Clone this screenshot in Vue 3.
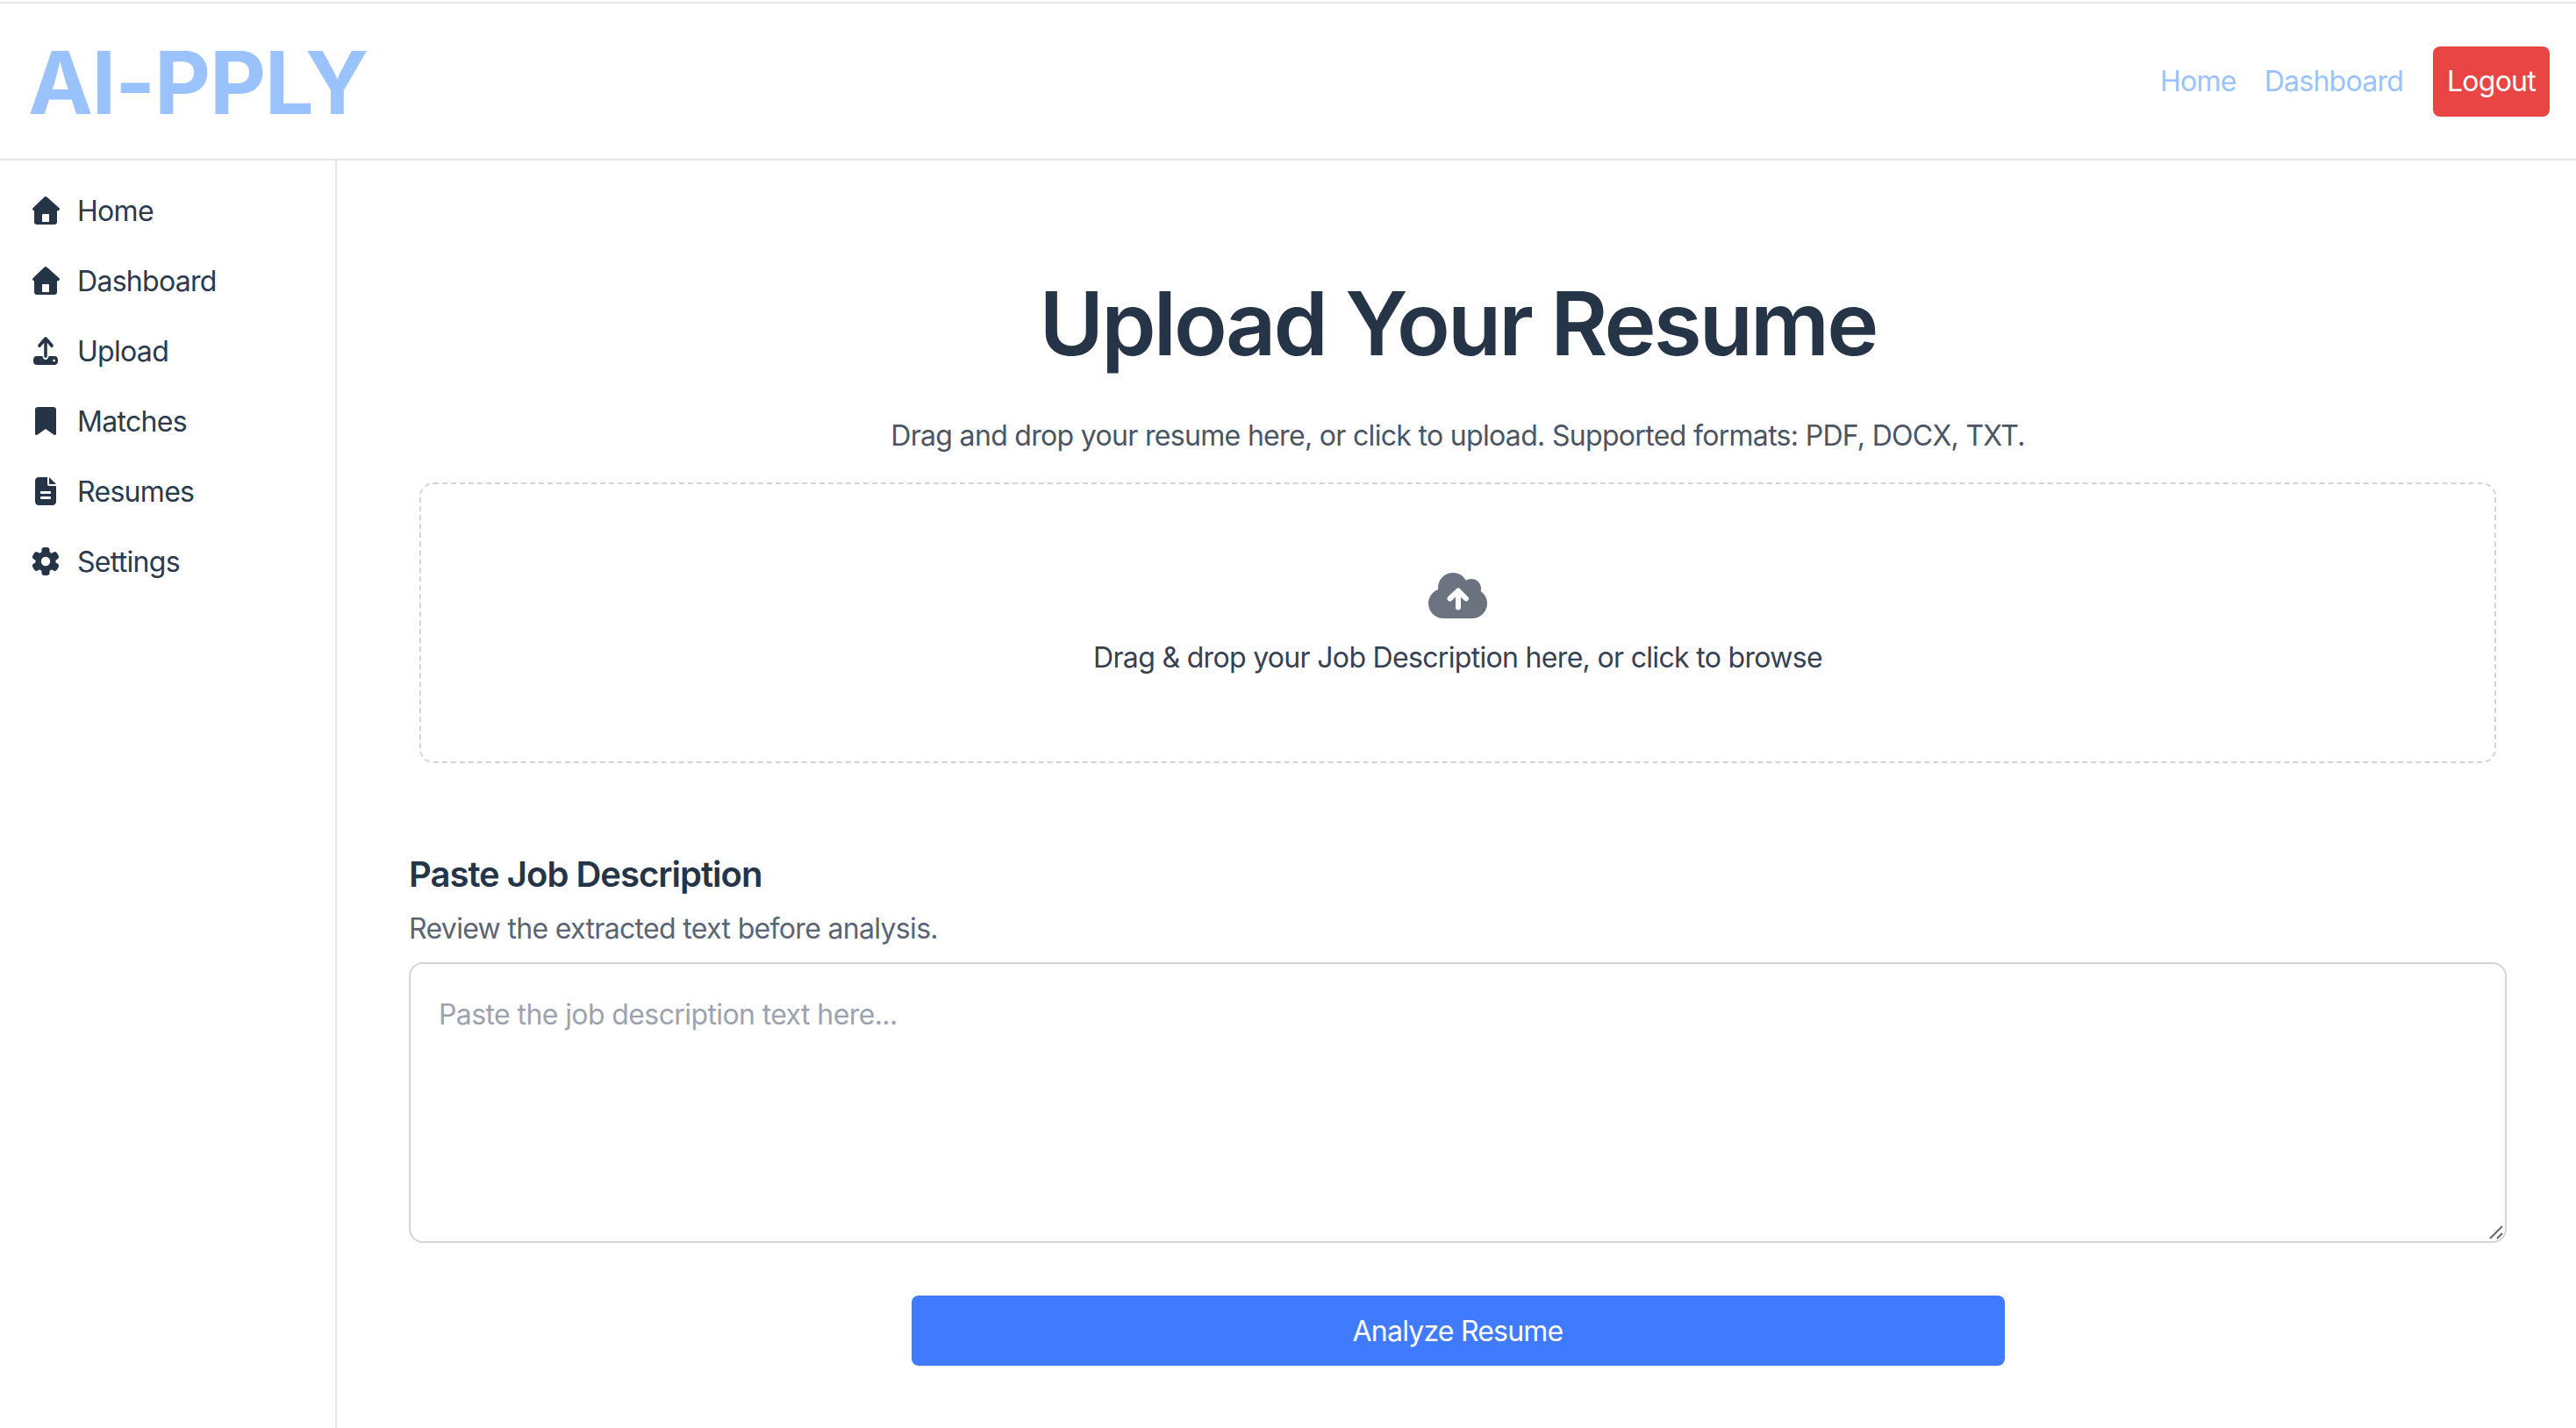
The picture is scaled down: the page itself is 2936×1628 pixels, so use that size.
<script setup>
const upload = { box: "0 0 512 512", width: 28, d: "M288 109.3V352c0 17.7-14.3 32-32 32s-32-14.3-32-32V109.3l-73.4 73.4c-12.5 12.5-32.8 12.5-45.3 0s-12.5-32.8 0-45.3l128-128c12.5-12.5 32.8-12.5 45.3 0l128 128c12.5 12.5 12.5 32.8 0 45.3s-32.8 12.5-45.3 0L288 109.3zM64 352H192c0 35.3 28.7 64 64 64s64-28.7 64-64H448c35.3 0 64 28.7 64 64v32c0 35.3-28.7 64-64 64H64c-35.3 0-64-28.7-64-64V416c0-35.3 28.7-64 64-64zM432 456a24 24 0 1 0 0-48 24 24 0 1 0 0 48z" };
const house = { box: "0 0 32 32", width: 32, d: "M14.6 .6c.8-.7 2-.7 2.8 0l13.9 12.3c1.3 1.2.5 3.3-1.3 3.3H29V29c0 1.7-1.3 3-3 3H6c-1.7 0-3-1.3-3-3V16.2h-.0c-1.8 0-2.6-2.1-1.3-3.3zM13 20c-.6 0-1 .4-1 1v8h8v-8c0-.6-.4-1-1-1z" };
const bookmark = { box: "0 0 384 512", width: 24, d: "M0 48V487.7C0 501.1 10.9 512 24.3 512c5 0 9.9-1.5 14-4.4L192 400 345.7 507.6c4.1 2.9 9 4.4 14 4.4c13.4 0 24.3-10.9 24.3-24.3V48c0-26.5-21.5-48-48-48H48C21.5 0 0 21.5 0 48z" };
const file = { box: "0 0 384 512", width: 24, d: "M64 0C28.7 0 0 28.7 0 64V448c0 35.3 28.7 64 64 64H320c35.3 0 64-28.7 64-64V160H256c-17.7 0-32-14.3-32-32V0H64zM256 0V128H384L256 0zM112 256H272c8.8 0 16 7.2 16 16v16c0 8.8-7.2 16-16 16H112c-8.8 0-16-7.2-16-16v-16c0-8.8 7.2-16 16-16zm0 96H272c8.8 0 16 7.2 16 16v16c0 8.8-7.2 16-16 16H112c-8.8 0-16-7.2-16-16v-16c0-8.8 7.2-16 16-16z" };

const navItems = [
  { label: "Home", icon: house },
  { label: "Dashboard", icon: house },
  { label: "Upload", icon: upload },
  { label: "Matches", icon: bookmark },
  { label: "Resumes", icon: file },
  { label: "Settings", icon: null },
];
</script>

<template>
  <div class="page">
    <header class="topbar">
      <div class="logo">AI-PPLY</div>
      <nav class="toplinks">
        <a class="toplink">Home</a>
        <a class="toplink">Dashboard</a>
        <button class="logout">Logout</button>
      </nav>
    </header>
    <div class="body">
      <aside class="sidebar">
        <a v-for="item in navItems" :key="item.label" class="navitem">
          <span class="navicon">
            <svg v-if="item.icon" :viewBox="item.icon.box" :width="item.icon.width" height="32" preserveAspectRatio="none">
              <path :d="item.icon.d" fill="currentColor" fill-rule="evenodd" />
            </svg>
            <svg v-else viewBox="0 0 32 32" width="32" height="32">
              <g fill="currentColor">
                <rect x="11.5" y="0" width="9" height="32" rx="3" />
                <rect x="11.5" y="0" width="9" height="32" rx="3" transform="rotate(60 16 16)" />
                <rect x="11.5" y="0" width="9" height="32" rx="3" transform="rotate(120 16 16)" />
                <circle cx="16" cy="16" r="11.5" />
              </g>
              <circle cx="16" cy="16" r="5.2" fill="#fff" />
            </svg>
          </span>
          {{ item.label }}
        </a>
      </aside>
      <main class="main">
        <h1 class="title">Upload Your Resume</h1>
        <p class="lead">Drag and drop your resume here, or click to upload. Supported formats: PDF, DOCX, TXT.</p>
        <div class="dropzone">
          <svg class="cloud" viewBox="0 0 67 52">
            <g fill="currentColor">
              <circle cx="28" cy="17" r="17" />
              <circle cx="49" cy="18" r="11" />
              <circle cx="17" cy="35" r="17" />
              <circle cx="50" cy="35" r="17" />
              <rect x="17" y="18" width="33" height="34" />
            </g>
            <path d="M34 39.5V21M24.5 29.5L34 20.5L43 29.5" fill="none" stroke="#fff" stroke-width="6" stroke-linecap="round" stroke-linejoin="round" />
          </svg>
          <p class="droptext">Drag &amp; drop your Job Description here, or click to browse</p>
        </div>
        <section class="jobdesc">
          <h2 class="jobtitle">Paste Job Description</h2>
          <p class="jobhint">Review the extracted text before analysis.</p>
          <div class="inputwrap">
            <textarea class="jobinput" placeholder="Paste the job description text here..."></textarea>
            <svg class="grip" viewBox="0 0 20 20">
              <path d="M2 16L16 2M10 16L16 10" stroke="#666" stroke-width="2" fill="none" />
            </svg>
          </div>
        </section>
        <button class="analyze">Analyze Resume</button>
      </main>
    </div>
  </div>
</template>

<style>
html, body {
  margin: 0;
  background: #fff;
}
</style>

<style scoped>
.page {
  width: 2936px;
  height: 1628px;
  display: flex;
  flex-direction: column;
  font-family: Inter, "Liberation Sans", sans-serif;
  box-sizing: border-box;
  padding-top: 2px;
  overflow: hidden;
}
.topbar {
  height: 181px;
  box-sizing: border-box;
  border-top: 2px solid #e5e7eb;
  border-bottom: 2px solid #e5e7eb;
  display: flex;
  align-items: center;
  justify-content: space-between;
  padding: 0 30px 0 32px;
}
.logo {
  font-size: 99px;
  font-weight: 700;
  letter-spacing: -1.3px;
  color: #9ac3fe;
  line-height: 1;
  padding-top: 4px;
}
.toplinks {
  display: flex;
  align-items: center;
  gap: 32px;
  font-size: 32px;
  letter-spacing: -0.75px;
}
.toplink {
  color: #9ac3fe;
}
.logout {
  height: 80px;
  width: 133px;
  margin-left: 2px;
  border: none;
  border-radius: 8px;
  background: #ea4545;
  color: #fff;
  font: inherit;
  letter-spacing: inherit;
  padding: 0;
}
.body {
  flex: 1;
  display: flex;
}
.sidebar {
  width: 384px;
  box-sizing: border-box;
  border-right: 2px solid #e5e7eb;
  padding: 17px 36px;
  display: flex;
  flex-direction: column;
  flex-shrink: 0;
}
.navitem {
  height: 80px;
  display: flex;
  align-items: center;
  gap: 20px;
  font-size: 32px;
  letter-spacing: -0.7px;
  color: #2b3a4d;
}
.navicon {
  width: 32px;
  height: 32px;
  color: #253547;
  display: flex;
  align-items: center;
  justify-content: center;
}
.main {
  flex: 1;
  padding: 0 79px 0 82px;
  display: flex;
  flex-direction: column;
  align-items: center;
}
.title {
  margin: 138px 0 0;
  font-size: 100px;
  font-weight: 600;
  letter-spacing: -2.9px;
  line-height: 96px;
  color: #253547;
}
.lead {
  margin: 60px 0 0;
  font-size: 32px;
  letter-spacing: -0.68px;
  line-height: 40px;
  color: #4b5563;
}
.dropzone {
  width: 2367px;
  height: 320px;
  margin-top: 33px;
  box-sizing: border-box;
  padding-top: 3px;
  border: 2px dashed #d1d5db;
  border-radius: 16px;
  display: flex;
  flex-direction: column;
  align-items: center;
  justify-content: center;
}
.cloud {
  width: 67px;
  height: 52px;
  color: #6b7280;
}
.droptext {
  margin: 25px 0 0;
  font-size: 32px;
  letter-spacing: -0.68px;
  line-height: 40px;
  color: #374151;
}
.jobdesc {
  width: 100%;
  margin-top: 103px;
}
.jobtitle {
  margin: 0;
  font-size: 40px;
  font-weight: 600;
  letter-spacing: -1px;
  line-height: 48px;
  color: #253547;
}
.jobhint {
  margin: 18px 0 0;
  font-size: 32px;
  letter-spacing: -0.67px;
  line-height: 40px;
  color: #5b6472;
}
.inputwrap {
  position: relative;
  margin-top: 18px;
}
.jobinput {
  display: block;
  width: 100%;
  height: 320px;
  box-sizing: border-box;
  border: 2px solid #d1d5db;
  border-radius: 16px;
  padding: 38px 32px 32px;
  font: inherit;
  font-size: 32px;
  letter-spacing: -0.6px;
  line-height: 40px;
  outline: none;
  resize: none;
}
.jobinput::placeholder {
  color: #9ca3af;
}
.grip {
  position: absolute;
  right: 1px;
  bottom: 1px;
  width: 20px;
  height: 20px;
}
.analyze {
  width: 1246px;
  height: 80px;
  margin-top: 60px;
  border: none;
  border-radius: 8px;
  background: #407bff;
  color: #fff;
  font: inherit;
  font-size: 32px;
  letter-spacing: -0.8px;
  padding: 0;
}
</style>
